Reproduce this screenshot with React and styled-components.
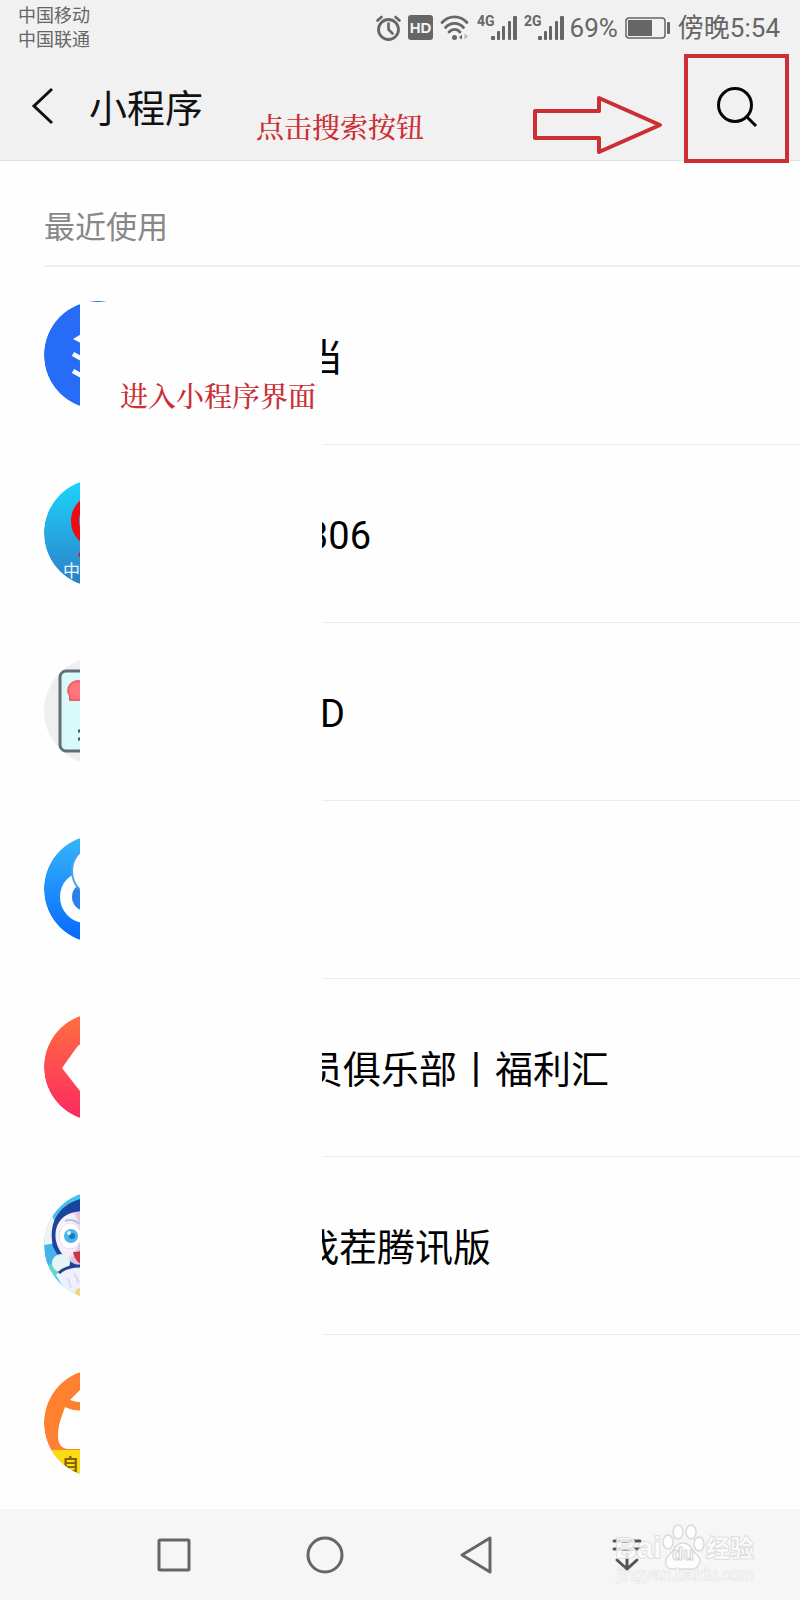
import React from "react";
import styled, { createGlobalStyle } from "styled-components";

const ink = "#666666";
const red = "#cb2f33";
const sans = 'Roboto, "Noto Sans CJK SC", sans-serif';

const GlobalStyle = createGlobalStyle`
  *, *::before, *::after { box-sizing: border-box; }
  body { margin: 0; background: #fefefe; font-family: ${sans}; }
  button { margin: 0; padding: 0; border: 0; background: none; color: inherit; font: inherit; cursor: pointer; }
  svg { display: block; flex: none; }
`;

const Page = styled.div`
  display: flex;
  flex-direction: column;
  min-height: 100vh;
`;

const Top = styled.header`
  background: #f1f1f1;
  border-bottom: 1px solid #e2e2e2;
`;

const StatusBar = styled.div`
  display: flex;
  justify-content: space-between;
  height: 52px;
  padding: 0 20px 0 18px;
  color: ${ink};
`;

const Carriers = styled.div`
  display: flex;
  flex-direction: column;
  padding-top: 4px;
  font-size: 18px;
  line-height: 24px;
`;

const Indicators = styled.div`
  display: flex;
  align-items: center;
  gap: 7px;
  padding-top: 3px;
  font-size: 26px;
  line-height: 32px;
`;

const Network = styled.div`
  display: flex;
  align-items: center;
  gap: 6px;
`;

const TitleBar = styled.div`
  display: flex;
  align-items: center;
  height: 108px;
  padding: 0 11px 0 20px;
`;

const BackButton = styled.button`
  display: flex;
  align-items: center;
  justify-content: center;
  width: 46px;
  height: 48px;
`;

const Title = styled.h1`
  margin: 0 0 0 23px;
  padding-top: 6px;
  color: #111;
  font-size: 38px;
  font-weight: 400;
  line-height: 48px;
`;

const Hint = styled.p`
  margin: 0;
  color: ${red};
  font-family: "Noto Serif CJK SC", "Noto Sans CJK SC", serif;
  font-size: 28px;
  font-weight: 500;
  line-height: 36px;
  white-space: nowrap;
`;

const HeaderHint = styled(Hint)`
  align-self: flex-end;
  margin: 0 auto 16px 53px;
`;

const ArrowSlot = styled.div`
  align-self: flex-end;
  margin: 0 21px 5px 0;
`;

const SearchButton = styled.button`
  display: flex;
  align-items: center;
  justify-content: center;
  align-self: flex-start;
  flex: none;
  width: 105px;
  height: 109px;
  margin-top: 2px;
  padding-bottom: 4px;
  border: 4px solid ${red};
`;

const SectionTitle = styled.h2`
  margin: 0 0 0 44px;
  padding: 47px 0 17px;
  border-bottom: 2px solid #f0f0f0;
  color: #888;
  font-size: 31px;
  font-weight: 400;
  line-height: 40px;
`;

const ListArea = styled.main`
  position: relative;
`;

const List = styled.ul`
  margin: 0;
  padding: 0;
  list-style: none;
`;

const Item = styled.li`
  &:last-child a { height: 174px; }
  &:last-child span { border-bottom: 0; }
`;

const Row = styled.a`
  display: flex;
  height: 178px;
  padding-left: 44px;
  color: #000;
  text-decoration: none;
`;

const Avatar = styled.svg`
  width: 108px;
  height: 108px;
  margin-top: 34px;
  border-radius: 50%;
`;

const Name = styled.span`
  display: flex;
  align-items: center;
  flex: 1;
  margin-left: 36px;
  padding-top: 5px;
  padding-left: ${(p) => p.$lead}px;
  border-bottom: 1px solid #ececec;
  font-size: 38px;
  line-height: 48px;
  white-space: nowrap;
`;

const Cover = styled.div`
  position: absolute;
  top: 35px;
  bottom: 0;
  left: 80px;
  width: 242px;
  padding: 75px 0 0 40px;
  background: #fefefe;
`;

const NavBar = styled.nav`
  position: relative;
  display: flex;
  height: 91px;
  margin-top: auto;
  padding: 0 98px;
  background: #f6f6f6;
`;

const NavButton = styled.button`
  display: flex;
  align-items: center;
  justify-content: center;
  flex: 1;
`;

const Watermark = styled.svg`
  position: absolute;
  right: 40px;
  bottom: 12px;
`;

const Signal = ({ label }) => (
  <svg width="40" height="32" viewBox="0 0 40 32" fill={ink} role="img" aria-label={label}>
    <text x="0" y="14" fontSize="14" fontWeight="700" fontFamily='"Liberation Sans Narrow", Roboto, sans-serif'>{label}</text>
    <g transform="translate(14 3)">
      <rect x="0" y="21" width="4" height="4" rx="1" />
      <rect x="6" y="16" width="3" height="9" rx="1" />
      <rect x="11" y="11" width="3" height="14" rx="1" />
      <rect x="17" y="6" width="3" height="19" rx="1" />
      <rect x="22" y="1" width="4" height="24" rx="1" />
    </g>
  </svg>
);

const AlarmIcon = () => (
  <svg width="25" height="26" viewBox="0 0 25 26" fill="none" stroke={ink} strokeLinecap="round">
    <circle cx="12.500" cy="14.500" r="10" strokeWidth="2.800" />
    <path d="M12.500 8.500v6l4 4" strokeWidth="2.600" />
    <path d="M1.500 5.500l4-3.500M23.500 5.500l-4-3.500" strokeWidth="2.600" />
  </svg>
);

const HdIcon = () => (
  <svg width="25" height="25" viewBox="0 0 25 25">
    <rect width="25" height="25" rx="3" fill={ink} />
    <text x="12.500" y="18" textAnchor="middle" fontSize="15" fontWeight="700" fill="#f4f4f4" fontFamily="Liberation Sans, sans-serif">HD</text>
  </svg>
);

const WifiIcon = () => (
  <svg width="30" height="26" viewBox="0 0 30 26" fill="none" stroke={ink} strokeWidth="2.800" strokeLinecap="round">
    <path d="M2 7.500C9 0 20 0 27 7.500" />
    <path d="M5.500 12.500c5-5.500 13-5.500 18 0" />
    <path d="M9 17c3.500-3.500 8-3.500 11 0" />
    <circle cx="14.500" cy="22.500" r="2.500" fill={ink} stroke="none" />
    <path d="M19 22.500l3-3v5z" fill={ink} stroke="none" />
    <path d="M24.500 18.500v6l3.500-3z" fill="#b5b5b5" stroke="none" />
  </svg>
);

const BatteryIcon = () => (
  <svg width="46" height="24" viewBox="0 0 46 24">
    <rect x="1" y="2" width="39" height="20" rx="3" fill="none" stroke={ink} strokeWidth="1.500" />
    <rect x="3" y="4" width="24" height="16" fill={ink} />
    <rect x="42" y="6" width="3" height="12" rx="1" fill={ink} />
  </svg>
);

const LayersAvatar = () => (
  <Avatar viewBox="0 0 108 108" aria-hidden="true">
    <circle cx="54" cy="54" r="54" fill="#266cf7" />
    <path d="M29 38L54 23l25 15-25 13z" fill="#fff" />
    <path d="M29 53l25 14 25-14M29 70l25 14 25-14" fill="none" stroke="#fff" strokeWidth="4.500" />
  </Avatar>
);

const RailAvatar = () => (
  <Avatar viewBox="0 0 108 108" aria-hidden="true">
    <defs>
      <linearGradient id="rail" x2="0" y2="1">
        <stop stopColor="#1cd6fc" />
        <stop offset="1" stopColor="#2c7dc6" />
      </linearGradient>
    </defs>
    <circle cx="54" cy="54" r="54" fill="url(#rail)" />
    <circle cx="55" cy="42" r="24" fill="none" stroke="#ec0d12" strokeWidth="8" />
    <path d="M34 75l3-3h30v6H35z" fill="#c82336" />
    <text x="19" y="98" fontSize="17" fill="#e9f6ff" fontFamily="Noto Sans CJK SC, sans-serif">中</text>
  </Avatar>
);

const CardAvatar = () => (
  <Avatar viewBox="0 0 108 108" aria-hidden="true">
    <circle cx="54" cy="54" r="54" fill="#efefef" />
    <rect x="16" y="14" width="76" height="80" rx="6" fill="#d9fafa" stroke="#626d77" strokeWidth="3" />
    <path d="M26 43v-4a10 9.500 0 1 1 9 4z" fill="#ff757b" stroke="#ed6064" strokeWidth="2" strokeLinejoin="round" />
    <path d="M34 74h8M34 82h8" stroke="#4d5962" strokeWidth="3" />
  </Avatar>
);

const RingsAvatar = () => (
  <Avatar viewBox="0 0 108 108" aria-hidden="true">
    <defs>
      <linearGradient id="rings" x2="0" y2="1">
        <stop stopColor="#37b8f8" />
        <stop offset="1" stopColor="#0566ff" />
      </linearGradient>
    </defs>
    <circle cx="54" cy="54" r="54" fill="url(#rings)" />
    <circle cx="42" cy="62" r="20" fill="#2b80ec" stroke="#fff" strokeWidth="12" />
    <circle cx="54" cy="36" r="26" fill="#fff" stroke="#4ba2f3" strokeWidth="2" />
  </Avatar>
);

const DiamondAvatar = () => (
  <Avatar viewBox="0 0 108 108" aria-hidden="true">
    <defs>
      <linearGradient id="diamond" x2="0" y2="1">
        <stop stopColor="#ff7040" />
        <stop offset="1" stopColor="#fb2860" />
      </linearGradient>
    </defs>
    <circle cx="54" cy="54" r="54" fill="url(#diamond)" />
    <path d="M18 55l15-21q2-3 6-3h32l18 24-36 45z" fill="#fff" />
  </Avatar>
);

const MascotAvatar = () => (
  <Avatar viewBox="0 0 108 108" aria-hidden="true">
    <defs>
      <clipPath id="mascotClip"><circle cx="54" cy="54" r="54" /></clipPath>
      <radialGradient id="mascotFace" cx="0.4" cy="0.4">
        <stop stopColor="#fff" />
        <stop offset="0.8" stopColor="#f4ecf7" />
        <stop offset="1" stopColor="#dfc5e2" />
      </radialGradient>
    </defs>
    <g clipPath="url(#mascotClip)">
      <rect width="108" height="108" fill="#45c3ed" />
      <path d="M0 32l8-8 6 16-4 20H0z" fill="#eef4f4" />
      <path d="M0 54l12-2 4 20-14 2z" fill="#46b4ea" />
      <path d="M2 78l8-8 12 12-10 4z" fill="#6ad6cb" />
      <path d="M40 7C18 12 3 28 9 56l9 16 22 8z" fill="#1b459c" />
      <path d="M40 20C18 20 9 34 12 50c3 14 14 23 28 26z" fill="url(#mascotFace)" />
      <circle cx="17" cy="72" r="9" fill="#e6f4f5" />
      <path d="M12 84q10-11 28-8v32H26z" fill="#eef0fb" />
      <path d="M15 82q8-8 24-7" stroke="#223f91" strokeWidth="3" fill="none" />
      <path d="M24 87l3 10M30 82l5 10" stroke="#dadaf2" strokeWidth="2" />
      <path d="M21 30q8-3 14 3" stroke="#adc5db" strokeWidth="2" fill="none" />
      <ellipse cx="26" cy="45" rx="11" ry="13" fill="#fff" stroke="#e9dbe8" />
      <circle cx="27" cy="45" r="7" fill="#48b6e8" />
      <circle cx="28" cy="45" r="3" fill="#1978ba" />
      <circle cx="25" cy="42" r="2" fill="#d8f5ff" />
      <path d="M29 61q8 0 12-3v17q-10-3-12-14z" fill="#ce344c" />
      <circle cx="36" cy="102" r="5" fill="#f1d47b" />
    </g>
  </Avatar>
);

const FoxAvatar = () => (
  <Avatar viewBox="0 0 108 108" aria-hidden="true">
    <defs>
      <clipPath id="foxClip"><circle cx="54" cy="54" r="54" /></clipPath>
    </defs>
    <g clipPath="url(#foxClip)">
      <rect width="108" height="108" fill="#ff8130" />
      <path d="M42 15L26 31q8 3 16 2z" fill="#fff" />
      <path d="M21 38q10 5 21 3v39H24c-6 0-10-5-10-13 0-12 4-20 7-29z" fill="#fff" />
      <rect y="81" width="108" height="27" fill="#fbdc14" />
      <text x="18" y="102" fontSize="17" fontWeight="700" fill="#856008" fontFamily="Noto Sans CJK SC, sans-serif">自</text>
    </g>
  </Avatar>
);

/* lead: width of the part of the name that lies under the cover */
const programs = [
  { id: "layers", Icon: LayersAvatar, name: "当", lead: 117 },
  { id: "rail", Icon: RailAvatar, name: "306", lead: 119 },
  { id: "card", Icon: CardAvatar, name: "D", lead: 132 },
  { id: "rings", Icon: RingsAvatar, name: "", lead: 0 },
  { id: "club", Icon: DiamondAvatar, name: "员俱乐部丨福利汇", lead: 117 },
  { id: "mascot", Icon: MascotAvatar, name: "找茬腾讯版", lead: 113 },
  { id: "fox", Icon: FoxAvatar, name: "", lead: 0 },
];

const BaiduMark = () => (
  <Watermark width="148" height="72" viewBox="0 0 148 72" fill="#fff" fillOpacity="0.75" stroke="#dadada" strokeWidth="1.500" role="img" aria-label="Baidu 经验">
    <g fontFamily="Liberation Sans, Noto Sans CJK SC, sans-serif" fontWeight="700" paintOrder="stroke">
      <text x="3" y="42" fontSize="30">Bai</text>
      <text x="94" y="41" fontSize="24">经验</text>
    </g>
    <ellipse cx="56" cy="26" rx="5" ry="7" />
    <ellipse cx="66" cy="16" rx="5" ry="7" />
    <ellipse cx="79" cy="16" rx="5" ry="7" />
    <ellipse cx="87" cy="28" rx="5" ry="7" />
    <path d="M71 27c8 0 8 7 14 12 6 4 2 14-5 14H61c-9 0-9-10-4-14 6-5 6-12 14-12z" />
    <text x="60" y="44" fontSize="18" fontWeight="700" fontFamily="Liberation Sans, sans-serif" stroke="#d2d2d2" strokeWidth="1">du</text>
    <text x="5" y="64" fontSize="17" fontFamily="Liberation Sans, sans-serif" strokeWidth="1" stroke="#dedede" paintOrder="stroke">jingyan.baidu.com</text>
  </Watermark>
);

export default function App() {
  return (
    <Page>
      <GlobalStyle />
      <Top>
        <StatusBar>
          <Carriers>
            <span>中国移动</span>
            <span>中国联通</span>
          </Carriers>
          <Indicators>
            <AlarmIcon />
            <HdIcon />
            <WifiIcon />
            <Signal label="4G" />
            <Network>
              <Signal label="2G" />
              <span>69%</span>
            </Network>
            <BatteryIcon />
            <span>傍晚5:54</span>
          </Indicators>
        </StatusBar>
        <TitleBar>
          <BackButton type="button" aria-label="返回">
            <svg width="24" height="40" viewBox="0 0 24 40" fill="none" stroke="#111" strokeWidth="3">
              <path d="M21 3L3 20l18 17" />
            </svg>
          </BackButton>
          <Title>小程序</Title>
          <HeaderHint>点击搜索按钮</HeaderHint>
          <ArrowSlot>
            <svg width="130" height="60" viewBox="0 0 130 60" fill="none" stroke={red} strokeWidth="4" strokeLinejoin="round" aria-hidden="true">
              <path d="M2 16h64V3l61 27-61 27V43H2z" />
            </svg>
          </ArrowSlot>
          <SearchButton type="button" aria-label="搜索">
            <svg width="42" height="42" viewBox="0 0 42 42" fill="none" stroke="#050505" strokeWidth="3">
              <circle cx="19" cy="19" r="16.500" />
              <path d="M30 30l10 10" />
            </svg>
          </SearchButton>
        </TitleBar>
      </Top>
      <SectionTitle>最近使用</SectionTitle>
      <ListArea>
        <List>
          {programs.map(({ id, Icon, name, lead }) => (
            <Item key={id}>
              <Row href={`#${id}`} aria-label={name || id}>
                <Icon />
                <Name $lead={lead}>{name}</Name>
              </Row>
            </Item>
          ))}
        </List>
        <Cover>
          <Hint>进入小程序界面</Hint>
        </Cover>
      </ListArea>
      <NavBar>
        <NavButton type="button" aria-label="最近任务">
          <svg width="34" height="34" viewBox="0 0 34 34" fill="none" stroke={ink} strokeWidth="3">
            <rect x="2" y="2" width="30" height="30" rx="1" />
          </svg>
        </NavButton>
        <NavButton type="button" aria-label="主屏幕">
          <svg width="38" height="38" viewBox="0 0 38 38" fill="none" stroke={ink} strokeWidth="3">
            <circle cx="19" cy="19" r="17" />
          </svg>
        </NavButton>
        <NavButton type="button" aria-label="后退">
          <svg width="34" height="38" viewBox="0 0 34 38" fill="none" stroke={ink} strokeWidth="3" strokeLinejoin="round">
            <path d="M31 2v34L3 19z" />
          </svg>
        </NavButton>
        <NavButton type="button" aria-label="下拉通知">
          <svg width="32" height="34" viewBox="0 0 32 34" fill="none" stroke="#555" strokeWidth="3" strokeLinecap="round">
            <path d="M3 3h26M3 11h26M16 17v14M6 22l10 9 10-9" />
          </svg>
        </NavButton>
        <BaiduMark />
      </NavBar>
    </Page>
  );
}
